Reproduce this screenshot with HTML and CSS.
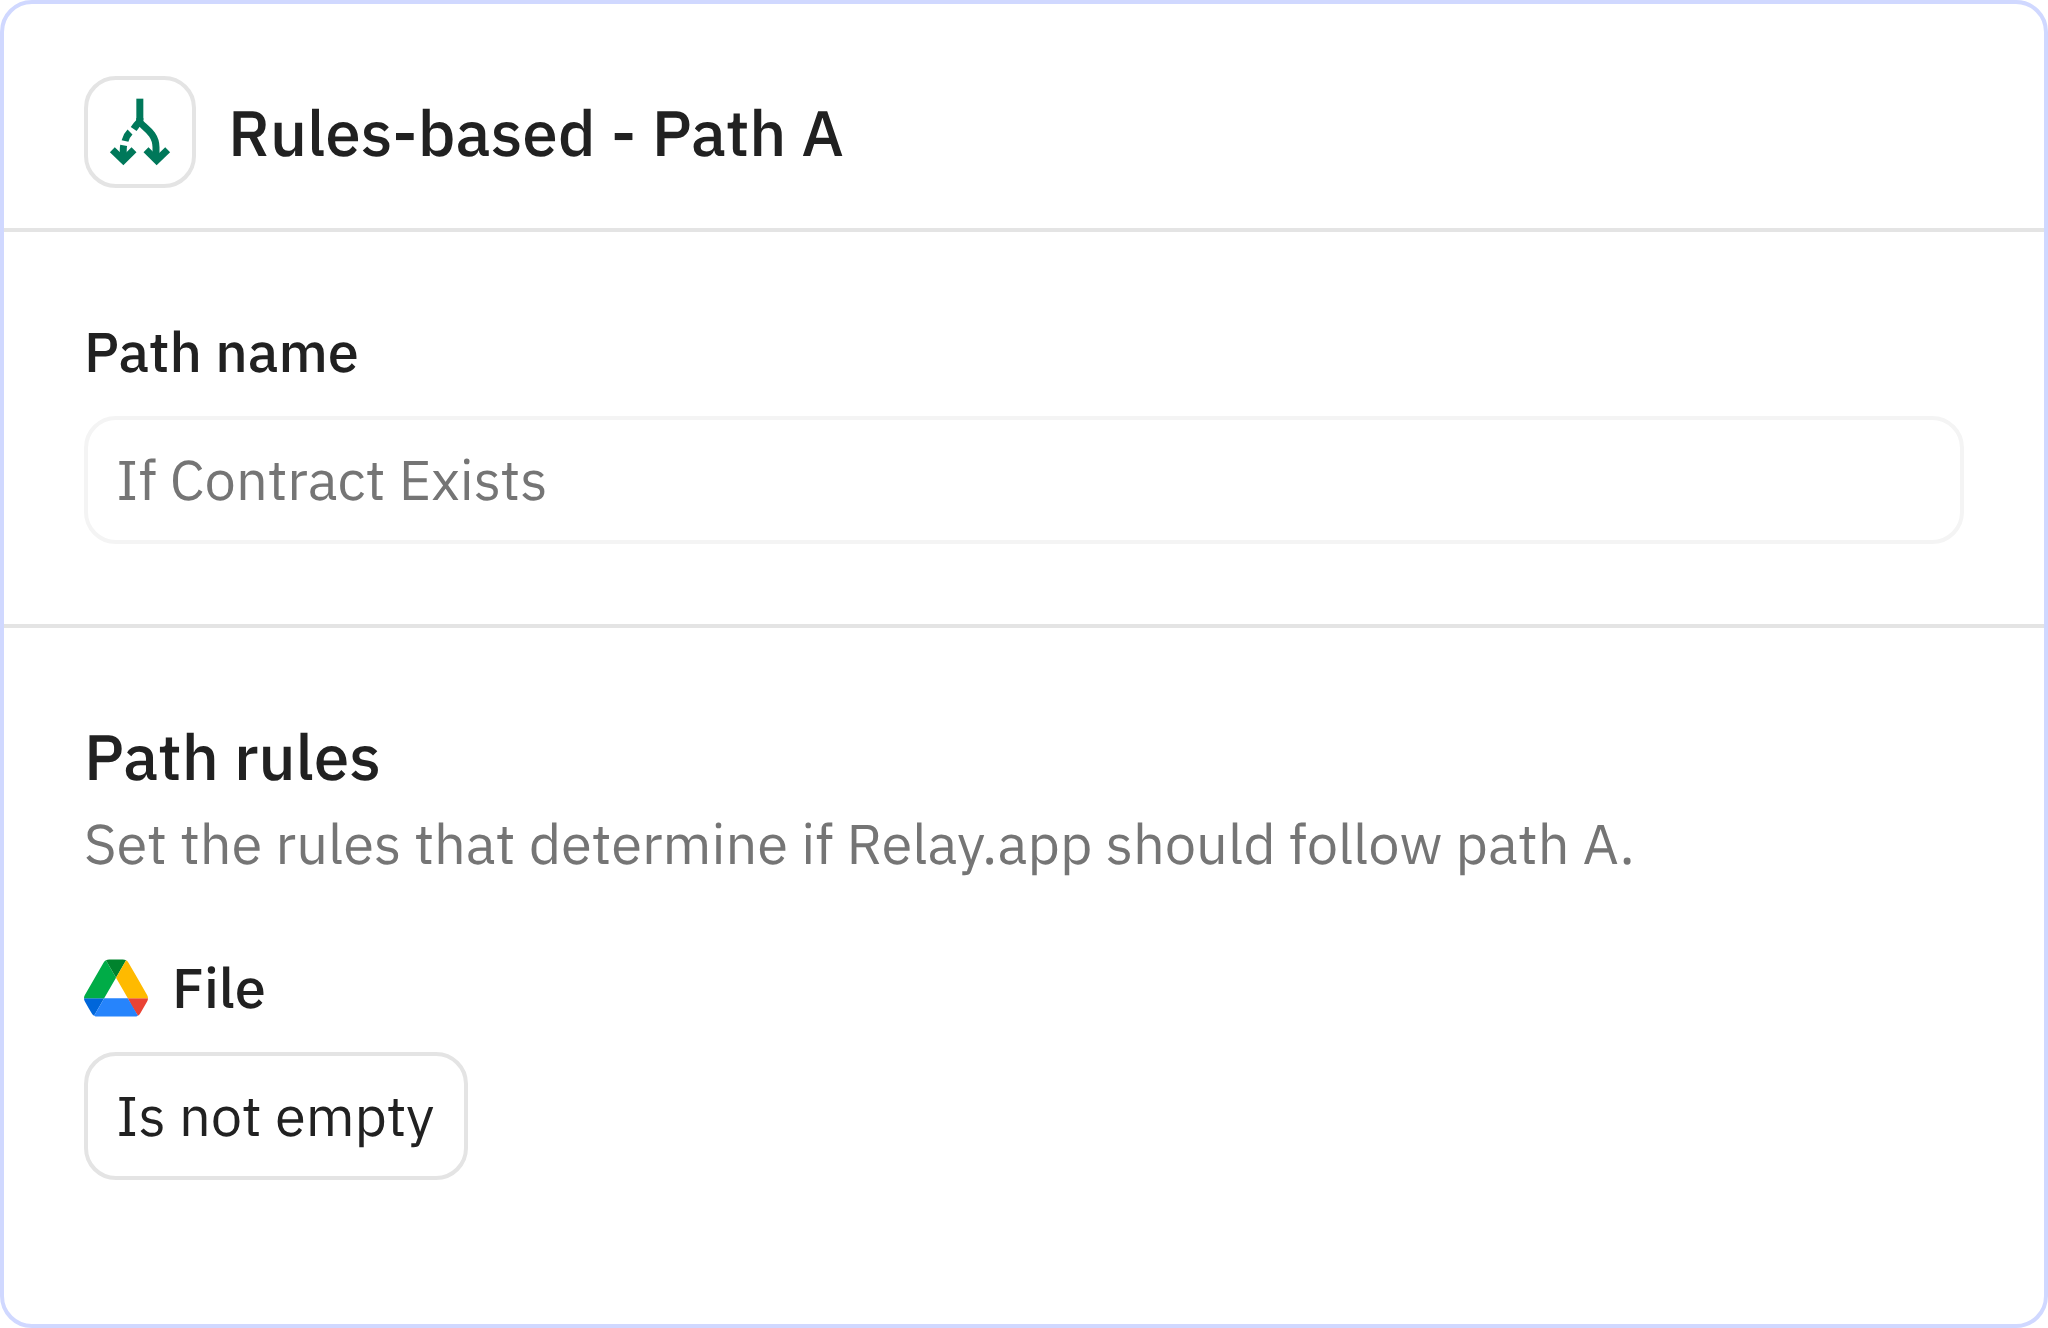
FILE: index.html
```html
<!DOCTYPE html>
<html lang="en">
<head>
<meta charset="utf-8">
<meta name="viewport" content="width=device-width, initial-scale=1">
<title>Rules-based - Path A</title>
<link rel="stylesheet" href="styles.css">
</head>
<body>
<main class="panel">
  <header class="panel-header">
    <span class="step-icon">
      <svg viewBox="54 60 312 312" aria-hidden="true">
        <g fill="none" stroke="#00785a" stroke-width="21">
          <path d="M209.500 116V181"/>
          <path d="M209.500 174V184C212 198 258 214 258 262V292"/>
          <path d="M210 184Q199 195 191 207"/>
          <path d="M180 216Q169 227 165 243"/>
          <path d="M161 256Q159 266 160 292"/>
          <path d="M127 269L160 301L192 269"/>
          <path d="M228 269L260 301L293 269"/>
        </g>
      </svg>
    </span>
    <h1 class="title">Rules-based - Path A</h1>
  </header>
  <section class="section name-section">
    <label class="label" for="path-name">Path name</label>
    <input class="field" id="path-name" type="text" placeholder="If Contract Exists">
  </section>
  <section class="section rules-section">
    <h2 class="title">Path rules</h2>
    <p class="description">Set the rules that determine if Relay.app should follow path A.</p>
    <h3 class="label rule-source">
      <svg class="drive-icon" viewBox="0 0 87.3 78" aria-hidden="true">
        <path fill="#0066da" d="m6.6 66.850 3.850 6.650c.8 1.400 1.950 2.500 3.300 3.300l13.750-23.800h-27.500c0 1.550.4 3.100 1.200 4.500z"/>
        <path fill="#00ac47" d="m43.650 25-13.750-23.800c-1.350.8-2.500 1.900-3.300 3.300l-25.400 44a9.060 9.060 0 0 0 -1.200 4.500h27.500z"/>
        <path fill="#ea4335" d="m73.550 76.800c1.350-.8 2.500-1.900 3.300-3.300l1.600-2.750 7.650-13.250c.8-1.400 1.200-2.950 1.200-4.500h-27.500l5.850 11.500z"/>
        <path fill="#00832d" d="m43.650 25 13.750-23.800c-1.350-.8-2.900-1.200-4.500-1.200h-18.500c-1.600 0-3.150.450-4.500 1.200z"/>
        <path fill="#2684fc" d="m59.800 53h-32.300l-13.750 23.800c1.350.8 2.900 1.200 4.500 1.200h50.800c1.600 0 3.150-.450 4.500-1.200z"/>
        <path fill="#ffba00" d="m73.400 26.500-12.700-22c-.8-1.400-1.950-2.500-3.300-3.300l-13.750 23.800 16.150 28h27.450c0-1.550-.4-3.100-1.200-4.500z"/>
      </svg>
      File
    </h3>
    <button class="condition" type="button">Is not empty</button>
  </section>
</main>
</body>
</html>
```
FILE: styles.css
```css
* { box-sizing: border-box; }

body {
  margin: 0;
  background: #fff;
  color: #212121;
  font-family: "IBM Plex Sans", Roboto, sans-serif;
  font-size: 56px;
  line-height: 80px;
  text-rendering: geometricPrecision;
}

.panel {
  min-height: 100vh;
  border: 4px solid #d0d8ff;
  border-radius: 32px;
  background: #fff;
}

.panel-header {
  display: flex;
  align-items: center;
  gap: 32px;
  padding: 72px 80px 40px;
  border-bottom: 4px solid #e4e4e4;
}

.step-icon {
  flex: none;
  width: 112px;
  height: 112px;
  border: 4px solid #e4e4e4;
  border-radius: 32px;
}

.step-icon svg { display: block; width: 100%; height: 100%; }

.title {
  margin: 0;
  font-size: 64px;
  font-weight: 500;
}

.section { display: flex; flex-direction: column; }

.name-section {
  gap: 24px;
  padding: 80px;
  border-bottom: 4px solid #e4e4e4;
}

.label { margin: 0; font-size: 56px; font-weight: 500; }

.field {
  width: 100%;
  height: 128px;
  padding: 0 28px;
  border: 4px solid #f4f4f4;
  border-radius: 32px;
  background: #fff;
  color: #212121;
  font: inherit;
  text-rendering: inherit;
}

.field::placeholder { color: #757575; opacity: 1; }

.rules-section { align-items: flex-start; padding: 88px 80px 80px; }

.description { margin: 8px 0 0; color: #757575; }

.rule-source {
  display: flex;
  align-items: center;
  gap: 24px;
  margin-top: 64px;
}

.drive-icon { width: 64px; height: 58px; }

.condition {
  min-width: 384px;
  height: 128px;
  margin-top: 24px;
  padding: 0 28px;
  border: 4px solid #e4e4e4;
  border-radius: 32px;
  background: #fff;
  color: #212121;
  font: inherit;
  text-align: left;
  text-rendering: inherit;
}
```
